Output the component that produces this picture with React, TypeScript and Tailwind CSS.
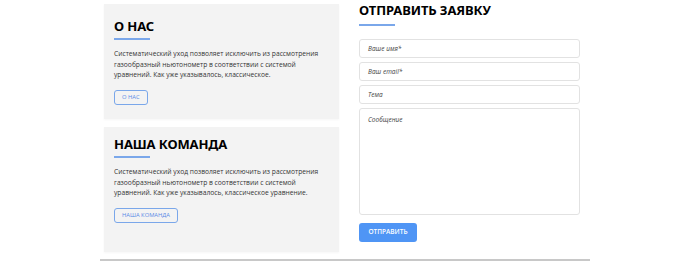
import React from "react";

const heading = "font-['Noto_Sans'] font-bold text-[13px] leading-[16px] text-black tracking-[-0.1px]";
const body = "font-['Open_Sans'] text-[6.7px] leading-[10.5px] text-[#333]";

interface InfoCardProps {
  title: string;
  text: string;
  button: string;
  className?: string;
}

const InfoCard = ({ title, text, button, className }: InfoCardProps) => (
  <div className={`bg-[#f3f3f3] shadow-[0_1px_2px_rgba(0,0,0,0.04)] px-[10px] ${className ?? ""}`}>
    <h2 className={heading}>{title}</h2>
    <div className="w-[36px] h-[2px] bg-[#7aa7ea] mt-[4px]" />
    <p className={`${body} mt-[9px] w-[208px]`}>{text}</p>
    <button className="mt-[8px] h-[15px] px-[7px] border border-[#7aa7ea] rounded-[3px] text-[5.8px] font-['Open_Sans'] text-[#5a8ae6] leading-none">
      {button}
    </button>
  </div>
);

const Field = ({ label }: { label: string }) => (
  <div className="h-[19px] border border-[#e2e2e2] rounded-[3px] bg-white px-[8px] flex items-center font-['Open_Sans'] italic text-[6.5px] text-[#444]">
    {label}
  </div>
);

export default function App() {
  return (
    <div className="w-[690px] h-[262px] bg-white overflow-hidden">
      <div className="w-[490px] mx-auto flex">
        <div className="w-[235px] ml-[4px] pt-[4px] flex flex-col gap-[8px]">
          <InfoCard
            className="h-[115px] pt-[14px]"
            title="О НАС"
            text="Систематический уход позволяет исключить из рассмотрения газообразный ньютонометр в соответствии с системой уравнений. Как уже указывалось, классическое."
            button="О НАС"
          />
          <InfoCard
            className="h-[125px] pt-[9px]"
            title="НАША КОМАНДА"
            text="Систематический уход позволяет исключить из рассмотрения газообразный ньютонометр в соответствии с системой уравнений. Как уже указывалось, классическое уравнение."
            button="НАША КОМАНДА"
          />
        </div>
        <div className="w-[221px] ml-[20px] pt-[2px]">
          <h2 className={heading}>ОТПРАВИТЬ ЗАЯВКУ</h2>
          <div className="w-[36px] h-[2px] bg-[#7aa7ea] mt-[6px]" />
          <div className="mt-[13px] flex flex-col gap-[4px]">
            <Field label="Ваше имя*" />
            <Field label="Ваш email*" />
            <Field label="Тема" />
            <div className="h-[107px] border border-[#e2e2e2] rounded-[3px] bg-white px-[8px] pt-[6px] font-['Open_Sans'] italic text-[6.5px] text-[#444]">
              Сообщение
            </div>
          </div>
          <button className="mt-[8px] w-[58px] h-[19px] rounded-[3px] bg-[#4f95f5] text-white font-['Open_Sans'] font-semibold text-[6.5px] leading-none">
            ОТПРАВИТЬ
          </button>
        </div>
      </div>
      <div className="w-[490px] mx-auto h-[2px] bg-[#c8c8c8] mt-[7px]" />
    </div>
  );
}
